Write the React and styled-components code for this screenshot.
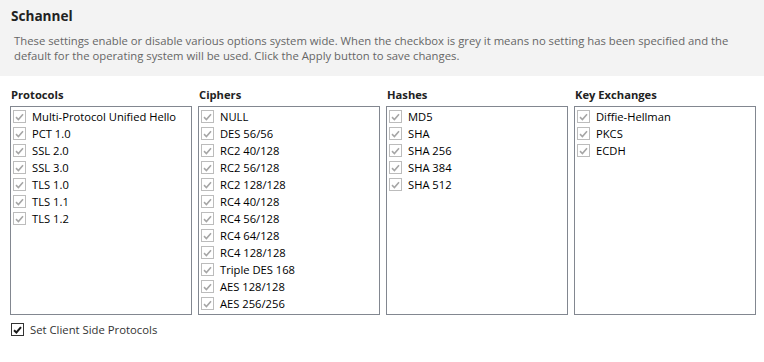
import styled, { createGlobalStyle } from "styled-components";

const GlobalStyle = createGlobalStyle`
  html, body {
    margin: 0;
    padding: 0;
    background: #ffffff;
  }
  body {
    font-family: "Open Sans", "Noto Sans", sans-serif;
    font-size: 12px;
    color: #1a1a1a;
  }
`;

const groups = [
  {
    title: "Protocols",
    items: [
      "Multi-Protocol Unified Hello",
      "PCT 1.0",
      "SSL 2.0",
      "SSL 3.0",
      "TLS 1.0",
      "TLS 1.1",
      "TLS 1.2",
    ],
  },
  {
    title: "Ciphers",
    items: [
      "NULL",
      "DES 56/56",
      "RC2 40/128",
      "RC2 56/128",
      "RC2 128/128",
      "RC4 40/128",
      "RC4 56/128",
      "RC4 64/128",
      "RC4 128/128",
      "Triple DES 168",
      "AES 128/128",
      "AES 256/256",
    ],
  },
  {
    title: "Hashes",
    items: ["MD5", "SHA", "SHA 256", "SHA 384", "SHA 512"],
  },
  {
    title: "Key Exchanges",
    items: ["Diffie-Hellman", "PKCS", "ECDH"],
  },
];

const Check = ({ disabled }) => (
  <Box disabled={disabled}>
    <svg width="9" height="8" viewBox="0 0 9 8">
      <path
        d="M1 4.2 L3.4 6.5 L8 1.2"
        fill="none"
        stroke={disabled ? "#a6a6a6" : "#1a1a1a"}
        strokeWidth={disabled ? 1.6 : 2}
      />
    </svg>
  </Box>
);

const App = () => {
  return (
    <>
      <GlobalStyle />
      <Page>
        <Header>
          <Title>Schannel</Title>
          <Description>
            These settings enable or disable various options system wide. When
            the checkbox is grey it means no setting has been specified and the
            default for the operating system will be used. Click the Apply
            button to save changes.
          </Description>
        </Header>

        <Groups>
          {groups.map((g) => (
            <Group key={g.title}>
              <GroupLabel>{g.title}</GroupLabel>
              <List>
                {g.items.map((item) => (
                  <Item key={item}>
                    <Check disabled />
                    <span>{item}</span>
                  </Item>
                ))}
              </List>
            </Group>
          ))}
        </Groups>

        <Footer>
          <Check />
          <FooterText>Set Client Side Protocols</FooterText>
        </Footer>
      </Page>
    </>
  );
};

export default App;

const Page = styled.div`
  width: 764px;
  height: 362px;
  overflow: hidden;
  background: #ffffff;
`;

const Header = styled.div`
  background: #f3f3f3;
  padding: 7px 10px 10px 11px;
  height: 59px;
`;

const Title = styled.div`
  font-weight: 700;
  font-size: 13.6px;
  line-height: 18px;
  color: #222222;
`;

const Description = styled.div`
  margin-top: 8px;
  padding-left: 3px;
  width: 725px;
  font-size: 11.3px;
  line-height: 15px;
  color: #666666;
`;

const Groups = styled.div`
  display: grid;
  grid-template-columns: repeat(4, 182px);
  column-gap: 6px;
  padding: 11px 8px 0 10px;
`;

const Group = styled.div`
  display: flex;
  flex-direction: column;
`;

const GroupLabel = styled.div`
  font-weight: 700;
  font-size: 11.2px;
  line-height: 16px;
  color: #222222;
  padding-left: 1px;
  margin-bottom: 3px;
`;

const List = styled.div`
  height: 205px;
  border: 1px solid #828790;
  padding: 1px 2px;
  display: flex;
  flex-direction: column;
`;

const Item = styled.div`
  display: flex;
  align-items: center;
  gap: 6px;
  height: 17px;
  font-size: 11.2px;
  color: #000000;
  white-space: nowrap;
`;

const Box = styled.span`
  width: 11px;
  height: 11px;
  flex: none;
  display: flex;
  align-items: center;
  justify-content: center;
  border: 1px solid ${(p) => (p.disabled ? "#bcbcbc" : "#333333")};
  background: #ffffff;
`;

const Footer = styled.div`
  display: flex;
  align-items: center;
  gap: 6px;
  padding: 7px 0 0 11px;
`;

const FooterText = styled.span`
  font-size: 11.3px;
  color: #333333;
`;
